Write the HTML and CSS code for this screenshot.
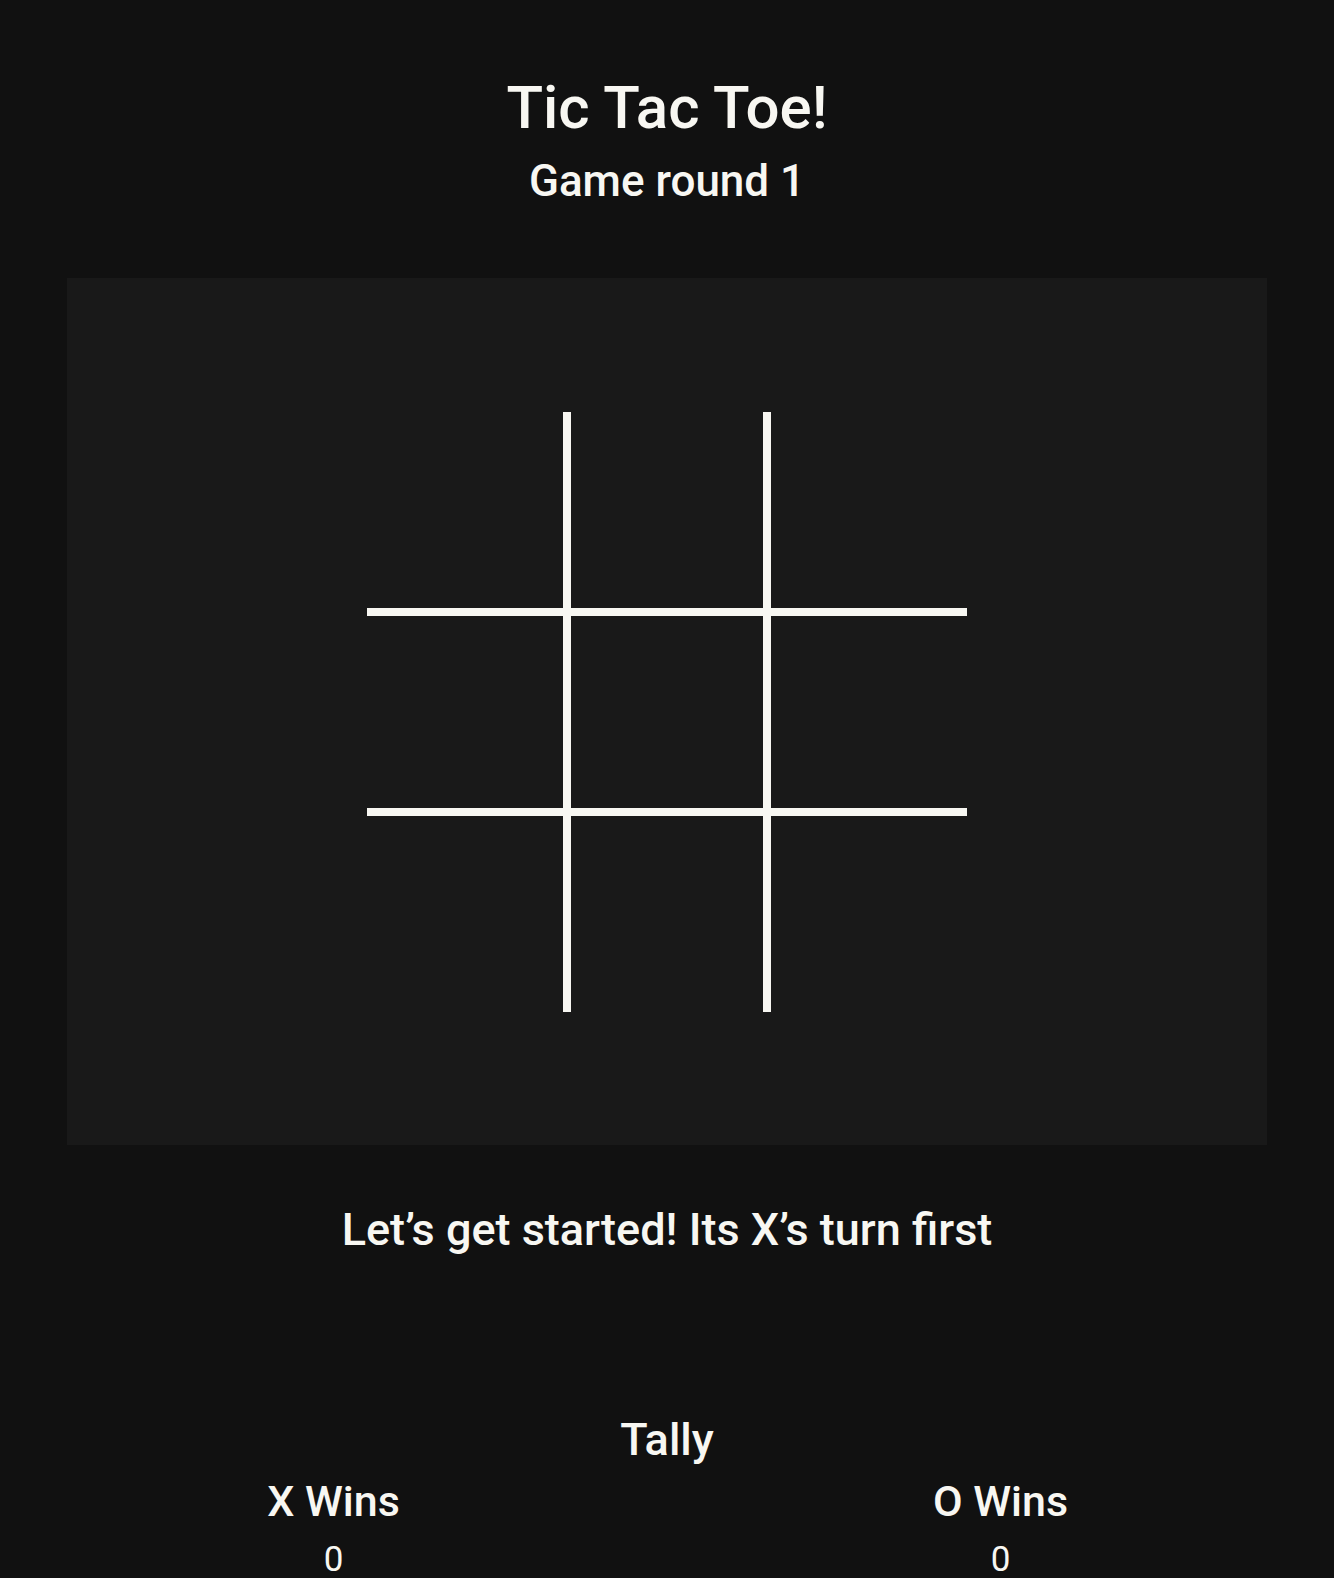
FILE: index.html
```html
<!DOCTYPE html>
<html lang="en">
<head>
<meta charset="utf-8">
<title>Tic Tac Toe</title>
<link rel="stylesheet" href="styles.css">
</head>
<body>
  <header class="header">
    <h1 class="title">Tic Tac Toe!</h1>
    <h2 class="round">Game round 1</h2>
  </header>
  <main class="board-wrap">
    <div class="board">
      <div class="cell"></div><div class="cell"></div><div class="cell"></div>
      <div class="cell"></div><div class="cell"></div><div class="cell"></div>
      <div class="cell"></div><div class="cell"></div><div class="cell"></div>
    </div>
  </main>
  <p class="status">Let’s get started! Its X’s turn first</p>
  <section class="tally">
    <h3 class="tally-title">Tally</h3>
    <div class="tally-cols">
      <div class="tally-col">
        <div class="tally-label">X Wins</div>
        <div class="tally-num">0</div>
      </div>
      <div class="tally-col">
        <div class="tally-label">O Wins</div>
        <div class="tally-num">0</div>
      </div>
    </div>
  </section>
</body>
</html>
```

FILE: styles.css
```css
html, body {
  margin: 0;
  padding: 0;
  background: #111111;
  color: #f8f7f2;
  font-family: Roboto, "Noto Sans", sans-serif;
  font-weight: 500;
}
.header {
  text-align: center;
}
.title {
  margin: 72px 0 0;
  font-size: 60px;
  font-weight: 500;
  line-height: normal;
}
.round {
  margin: 12px 0 0;
  font-size: 44px;
  font-weight: 500;
  line-height: normal;
}
.board-wrap {
  width: 90%;
  height: 867px;
  margin: 71px auto 0;
  background: #191919;
  display: flex;
  align-items: center;
  justify-content: center;
}
.board {
  display: grid;
  grid-template-columns: repeat(3, 200px);
  grid-template-rows: repeat(3, 200px);
}
.cell {
  box-sizing: border-box;
  border: 0 solid #f8f7f2;
}
.cell:nth-child(3n+1), .cell:nth-child(3n+2) { border-right-width: 4px; }
.cell:nth-child(3n+2), .cell:nth-child(3n) { border-left-width: 4px; }
.cell:nth-child(-n+6) { border-bottom-width: 4px; }
.cell:nth-child(n+4) { border-top-width: 4px; }
.status {
  margin: 58px 0 0;
  text-align: center;
  font-size: 45px;
  line-height: normal;
}
.tally {
  text-align: center;
}
.tally-title {
  margin: 157px 0 0;
  font-size: 45px;
  font-weight: 500;
  line-height: normal;
}
.tally-cols {
  display: flex;
}
.tally-col {
  flex: 1;
  text-align: center;
}
.tally-label {
  margin-top: 10px;
  font-size: 43px;
  line-height: normal;
}
.tally-num {
  margin-top: 13px;
  font-size: 35px;
  font-weight: 400;
  line-height: normal;
}
```
